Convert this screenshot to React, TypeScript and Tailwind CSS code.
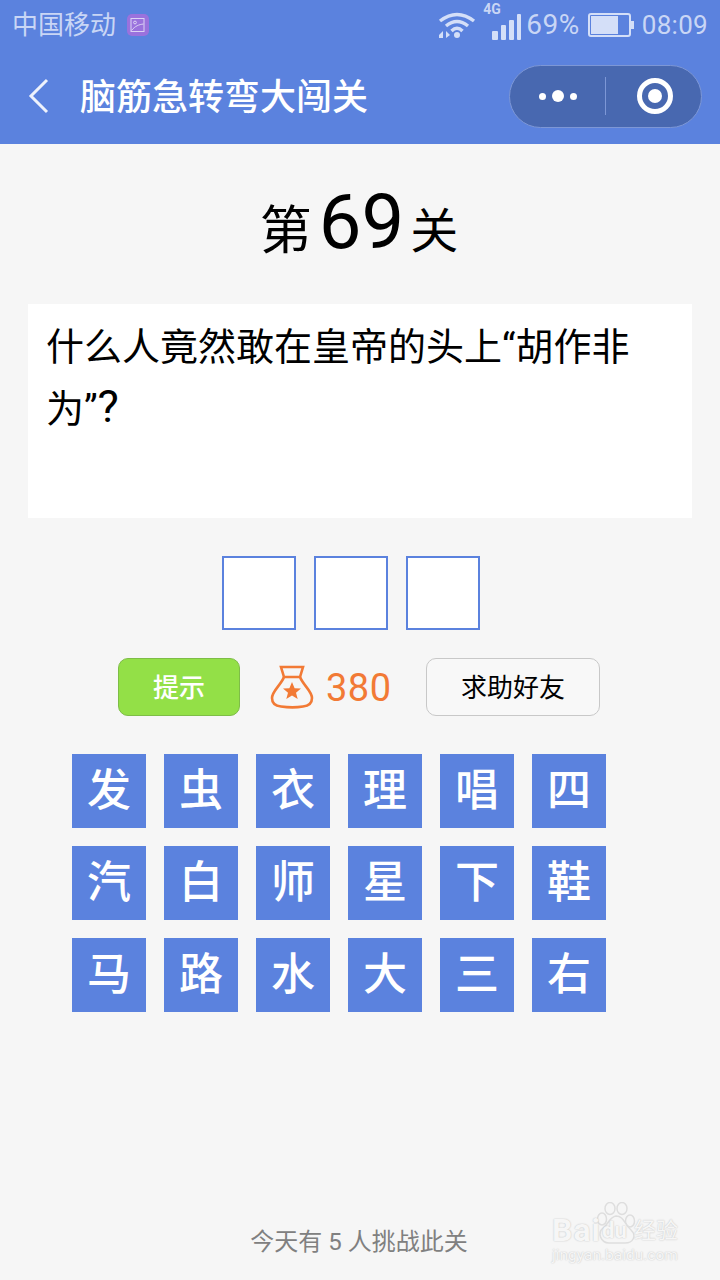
const FONT = "font-['Roboto','Noto_Sans_CJK_SC',sans-serif]";

const TILES = ["发", "虫", "衣", "理", "唱", "四", "汽", "白", "师", "星", "下", "鞋", "马", "路", "水", "大", "三", "右"];

const StatusBar = () => (
  <div className="flex h-12 items-center justify-between pl-[12px] pr-[12px] text-[26px] text-[#c9d6f5]">
    <div className="mt-[2px] flex items-center gap-[10px]">
      <span>中国移动</span>
      <svg width="24" height="24" viewBox="0 0 24 24">
        <rect x="1" y="1" width="22" height="22" rx="5" fill="#9a72dd" />
        <rect x="5" y="5.5" width="13" height="13" fill="none" stroke="#dcd3f5" strokeWidth="1" />
        <circle cx="9" cy="9.5" r="1.4" fill="none" stroke="#dcd3f5" strokeWidth="1" />
        <path d="M5.5 17.5C9 13 13 11.5 17.5 11" fill="none" stroke="#dcd3f5" strokeWidth="1" />
      </svg>
    </div>
    <div className="mt-[2px] flex items-center">
      <svg width="38" height="26" viewBox="0 0 38 26" className="mr-[16px]">
        <path d="M2 9Q19 -4 36 9M8 14Q19 5 30 14M13.5 19Q19 13.5 24.5 19" fill="none" stroke="#d4dff8" strokeWidth="3.4" />
        <circle cx="19" cy="23" r="3" fill="#d4dff8" />
        <path d="M1 23L5 19V26H1ZM8 19L12 23L8 26Z" fill="#d4dff8" />
      </svg>
      <div className="relative mr-[4px] h-[32px] w-[30px]">
        <span className="absolute left-[-9px] top-[-8px] text-[14px] leading-[16px] font-bold">4G</span>
        <svg width="30" height="32" viewBox="0 0 30 32">
          <rect x="0" y="22" width="6" height="9" rx="1" fill="#d4dff8" />
          <rect x="9" y="16" width="5" height="15" rx="1" fill="#d4dff8" />
          <rect x="17" y="11" width="5" height="20" rx="1" fill="#d4dff8" />
          <rect x="25" y="5" width="4" height="26" rx="1" fill="#d4dff8" />
        </svg>
      </div>
      <span className="mr-[8px] text-[28px] leading-none tracking-[0.5px]">69%</span>
      <svg width="46" height="24" viewBox="0 0 46 24" className="mr-[8px]">
        <rect x="1" y="1" width="41" height="22" rx="2" fill="none" stroke="#d4dff8" strokeWidth="2" />
        <rect x="3" y="3" width="27" height="18" fill="#d4dff8" />
        <rect x="43" y="8" width="3" height="8" fill="#d4dff8" />
      </svg>
      <span className="tracking-[0.3px]">08:09</span>
    </div>
  </div>
);

const TitleBar = () => (
  <div className="flex h-24 items-center justify-between pl-[28px] pr-[18px]">
    <div className="flex items-center">
      <svg width="22" height="36" viewBox="0 0 22 36" className="mr-[30px]">
        <path d="M19 2L3 18L19 34" fill="none" stroke="#eef2fc" strokeWidth="3" />
      </svg>
      <span className="mt-[4px] text-[36px] leading-none font-medium text-white">脑筋急转弯大闯关</span>
    </div>
    <div className="flex h-[63px] w-[193px] items-center rounded-full border border-[#7d97d6] bg-[#4868b0]">
      <div className="flex w-[95px] items-center justify-center gap-[6px]">
        <span className="h-[7px] w-[7px] rounded-full bg-white" />
        <span className="h-[12px] w-[12px] rounded-full bg-white" />
        <span className="h-[7px] w-[7px] rounded-full bg-white" />
      </div>
      <div className="h-[38px] w-px bg-[#7d97d6]" />
      <div className="flex flex-1 items-center justify-center pl-[2px]">
        <div className="flex h-[36px] w-[36px] items-center justify-center rounded-full border-[5px] border-white">
          <span className="h-[14px] w-[14px] rounded-full bg-white" />
        </div>
      </div>
    </div>
  </div>
);

const BagIcon = () => (
  <svg width="44" height="44" viewBox="0 0 44 44">
    <path d="M11 2H33L30 12H14Z" fill="none" stroke="#f27a35" strokeWidth="2.6" />
    <path d="M14 12C11 20 2 26 2 33C2 39 6 41 11 41.5C18 42.5 27 42.5 33 41.5C38 41 42 39 42 33C42 26 33 20 30 12" fill="none" stroke="#f27a35" strokeWidth="2.6" />
    <path d="M22 17L24.6 23.2L31 23.6L26 27.8L27.7 34L22 30.6L16.3 34L18 27.8L13 23.6L19.4 23.2Z" fill="#f27a35" />
  </svg>
);

const Watermark = () => (
  <div className="absolute left-[552px] top-[1202px] h-[64px] w-[130px] text-[#f6f6f6] [text-shadow:0_0_1.5px_#b8b8b8]">
    <svg width="48" height="42" viewBox="0 0 48 42" className="absolute left-[42px] top-0" fill="#f6f6f6" stroke="#dedede" strokeWidth="1.5">
      <ellipse cx="16" cy="6.5" rx="5" ry="6" />
      <ellipse cx="28" cy="6.5" rx="5" ry="6" />
      <ellipse cx="8" cy="17" rx="4.5" ry="6" />
      <ellipse cx="36" cy="19" rx="4.5" ry="6" />
      <path d="M22 14C15 15 15 22 9 26C3 31 7 41 15 41H31C39 41 43 34 37 28C30 22 30 14 22 14Z" />
    </svg>
    <span className="absolute left-0 top-[14px] text-[32px] leading-[28px] font-bold tracking-[1px]">Bai</span>
    <span className="absolute left-[50px] top-[16px] text-[22px] leading-[26px] font-bold">du</span>
    <span className="absolute left-[82px] top-[16px] text-[22px] leading-[26px]">经验</span>
    <span className="absolute left-0 top-[43px] text-[15.5px] leading-[20px] whitespace-nowrap">jingyan.baidu.com</span>
  </div>
);

export default function App() {
  return (
    <div className={`${FONT} relative h-[1280px] w-[720px] overflow-hidden bg-[#f6f6f6]`}>
      <div className="bg-[#5b82de]">
        <StatusBar />
        <TitleBar />
      </div>

      <div className="flex h-[160px] items-center justify-center pr-[2px] text-black">
        <span className="mt-[16px] text-[52px] leading-none">第</span>
        <span className="mt-[-4px] mr-[6px] ml-[7px] text-[76px] leading-none">69</span>
        <span className="mt-[16px] text-[48px] leading-none">关</span>
      </div>

      <div className="mx-[28px] h-[214px] bg-white py-[13px] pl-[18px] text-[38px] leading-[60px] text-black">
        什么人竟然敢在皇帝的头上“胡作非
        <br />
        为”<span className="text-[45px]">?</span>
      </div>

      <div className="mt-[38px] ml-[-18px] flex justify-center gap-[18px]">
        <div className="h-[74px] w-[74px] border-2 border-[#5b82de] bg-white" />
        <div className="h-[74px] w-[74px] border-2 border-[#5b82de] bg-white" />
        <div className="h-[74px] w-[74px] border-2 border-[#5b82de] bg-white" />
      </div>

      <div className="mt-[28px] flex h-[58px] items-center pl-[118px]">
        <div className="flex h-[58px] w-[122px] items-center justify-center rounded-[10px] border border-[#7ebd47] bg-[#93e047] pt-[2px] text-[26px] font-medium text-white">提示</div>
        <div className="ml-[30px] flex w-[156px] items-center gap-[12px]">
          <BagIcon />
          <span className="mt-[2px] text-[38px] leading-none tracking-[0.5px] text-[#f27a35]">380</span>
        </div>
        <div className="flex h-[58px] w-[174px] items-center justify-center rounded-[10px] border border-[#c8c8c8] bg-[#f8f8f8] pt-[2px] text-[26px] text-black">求助好友</div>
      </div>

      <div className="mt-[38px] grid w-fit grid-cols-[repeat(6,74px)] gap-[18px] pl-[72px]">
        {TILES.map((t) => (
          <div key={t} className="flex h-[74px] items-center justify-center bg-[#5b82de] text-[44px] leading-none font-medium text-white">{t}</div>
        ))}
      </div>

      <div className="absolute bottom-[20px] left-0 w-full pr-[2px] text-center text-[24px] leading-[36px] text-[#808080]">
        今天有 5 人挑战此关
      </div>

      <Watermark />
    </div>
  );
}
